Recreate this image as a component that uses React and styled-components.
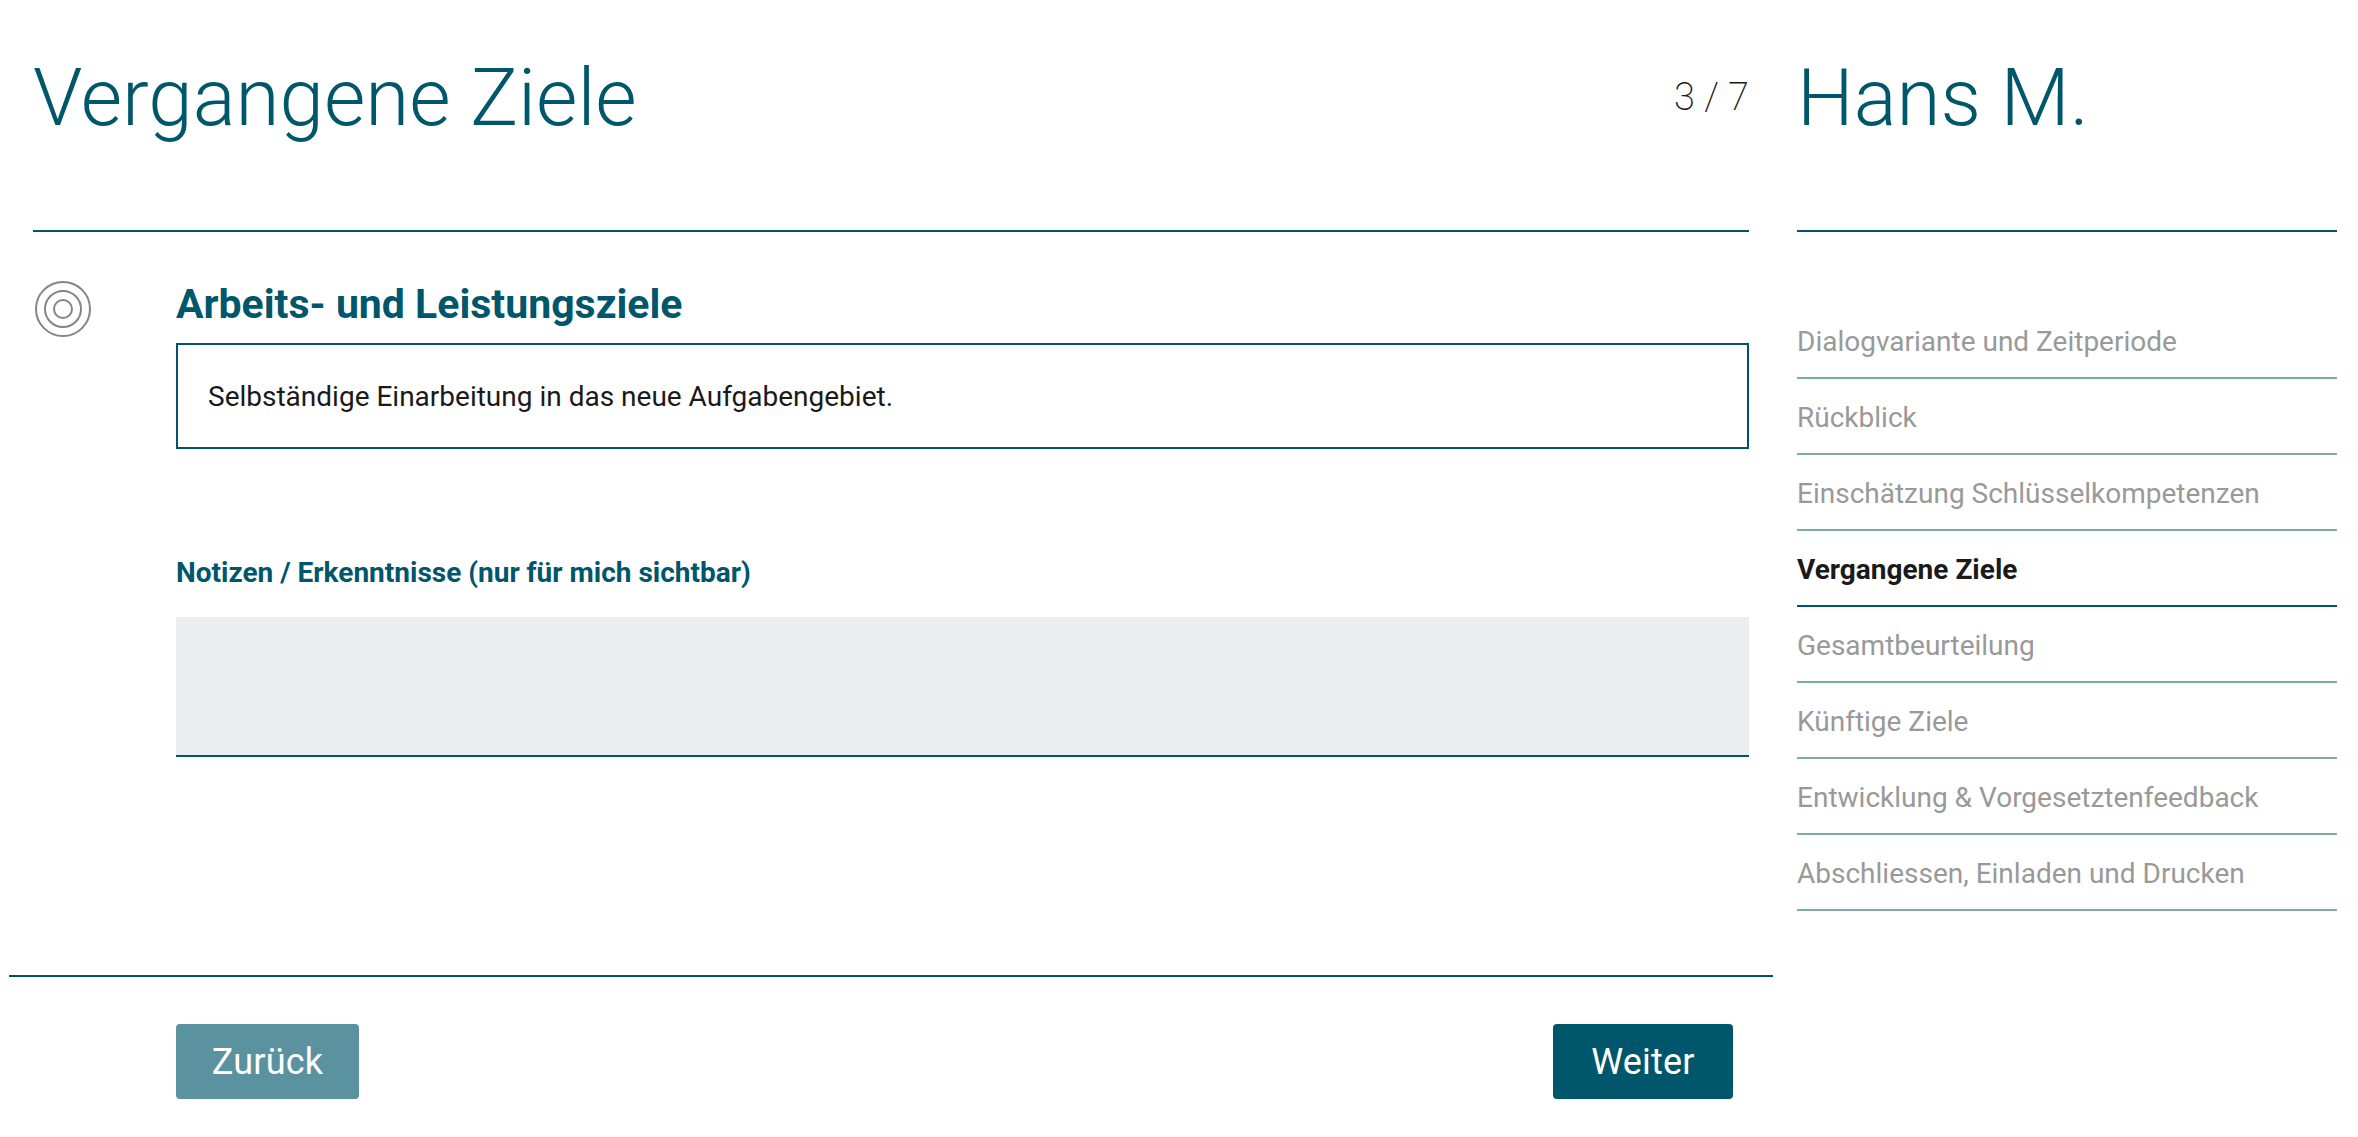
import React from 'react'
import styled, { createGlobalStyle } from 'styled-components'

const GlobalStyle = createGlobalStyle`
  html, body { margin: 0; padding: 0; background: #fff; }
  body { font-family: Roboto, "Liberation Sans", sans-serif; }
`

const Page = styled.div`
  display: grid;
  grid-template-columns: 1773px 585px;
  width: 2358px;
  height: 1137px;
  overflow: hidden;
`

const Main = styled.main`
  display: flex;
  flex-direction: column;
  padding-left: 9px;
`

const Header = styled.header`
  display: flex;
  justify-content: space-between;
  align-items: flex-start;
  height: 230px;
  margin: 0 24px;
  border-bottom: 2px solid #00556a;
  box-sizing: content-box;
`

const Title = styled.h1`
  margin: 52px 0 0;
  font-size: 80px;
  line-height: 92px;
  font-weight: 300;
  color: #00566a;
`

const Counter = styled.div`
  margin-top: 73px;
  font-size: 38px;
  line-height: 48px;
  font-weight: 200;
  color: #1a1a1a;
`

const Content = styled.section`
  display: grid;
  grid-template-columns: 143px 1fr;
  height: 743px;
  margin: 0 24px;
  box-sizing: border-box;
`

const TargetIcon = styled.svg`
  width: 60px;
  height: 60px;
  margin-top: 47px;
`

const Body = styled.div`
  display: flex;
  flex-direction: column;
`

const Heading = styled.h2`
  margin: 49px 0 0;
  font-size: 41px;
  line-height: 46px;
  font-weight: 700;
  color: #00566a;
`

const GoalBox = styled.div`
  display: flex;
  align-items: center;
  height: 106px;
  margin-top: 16px;
  padding: 0 30px;
  box-sizing: border-box;
  border: 2px solid #00556a;
  font-size: 28px;
  color: #1a1a1a;
`

const NotesLabel = styled.label`
  margin-top: 106px;
  font-size: 28px;
  line-height: 36px;
  font-weight: 700;
  color: #00566a;
`

const NotesField = styled.div`
  height: 140px;
  margin-top: 26px;
  box-sizing: border-box;
  background: #ebeef1;
  border-bottom: 2px solid #00556a;
`

const Footer = styled.footer`
  display: flex;
  justify-content: space-between;
  height: 160px;
  padding: 47px 40px 0 167px;
  box-sizing: border-box;
  border-top: 2px solid #00556a;
`

const ActionButton = styled.button`
  height: 75px;
  width: ${({ $width }) => $width}px;
  padding: 0;
  border: none;
  border-radius: 4px;
  background: ${({ $muted }) => ($muted ? '#5a929f' : '#00566a')};
  color: #fff;
  font-family: inherit;
  font-size: 36px;
  letter-spacing: 0.2px;
`

const Sidebar = styled.aside`
  display: flex;
  flex-direction: column;
  padding: 0 21px 0 24px;
`

const SideHeader = styled.div`
  height: 230px;
  border-bottom: 2px solid #00556a;
  box-sizing: content-box;
`

const NavList = styled.nav`
  display: flex;
  flex-direction: column;
  margin-top: 71px;
`

const NavItem = styled.div`
  display: flex;
  align-items: center;
  height: 76px;
  padding-top: 2px;
  box-sizing: border-box;
  border-bottom: 2px solid ${({ $active }) => ($active ? '#00556a' : '#7dabA8')};
  font-size: 28px;
  font-weight: ${({ $active }) => ($active ? 700 : 400)};
  color: ${({ $active }) => ($active ? '#1a1a1a' : '#999')};
`

const steps = [
  'Dialogvariante und Zeitperiode',
  'Rückblick',
  'Einschätzung Schlüsselkompetenzen',
  'Vergangene Ziele',
  'Gesamtbeurteilung',
  'Künftige Ziele',
  'Entwicklung & Vorgesetztenfeedback',
  'Abschliessen, Einladen und Drucken',
]

export default function App() {
  return (
    <Page>
      <GlobalStyle />
      <Main>
        <Header>
          <Title>Vergangene Ziele</Title>
          <Counter>3 / 7</Counter>
        </Header>
        <Content>
          <TargetIcon viewBox="0 0 60 60" fill="none" stroke="#858585" strokeWidth="2">
            <circle cx="30" cy="30" r="27" />
            <circle cx="30" cy="30" r="18" />
            <circle cx="30" cy="30" r="9" />
          </TargetIcon>
          <Body>
            <Heading>Arbeits- und Leistungsziele</Heading>
            <GoalBox>Selbständige Einarbeitung in das neue Aufgabengebiet.</GoalBox>
            <NotesLabel>Notizen / Erkenntnisse (nur für mich sichtbar)</NotesLabel>
            <NotesField />
          </Body>
        </Content>
        <Footer>
          <ActionButton $muted $width={183}>Zurück</ActionButton>
          <ActionButton $width={180}>Weiter</ActionButton>
        </Footer>
      </Main>
      <Sidebar>
        <SideHeader>
          <Title>Hans M.</Title>
        </SideHeader>
        <NavList>
          {steps.map((step) => (
            <NavItem key={step} $active={step === 'Vergangene Ziele'}>{step}</NavItem>
          ))}
        </NavList>
      </Sidebar>
    </Page>
  )
}
